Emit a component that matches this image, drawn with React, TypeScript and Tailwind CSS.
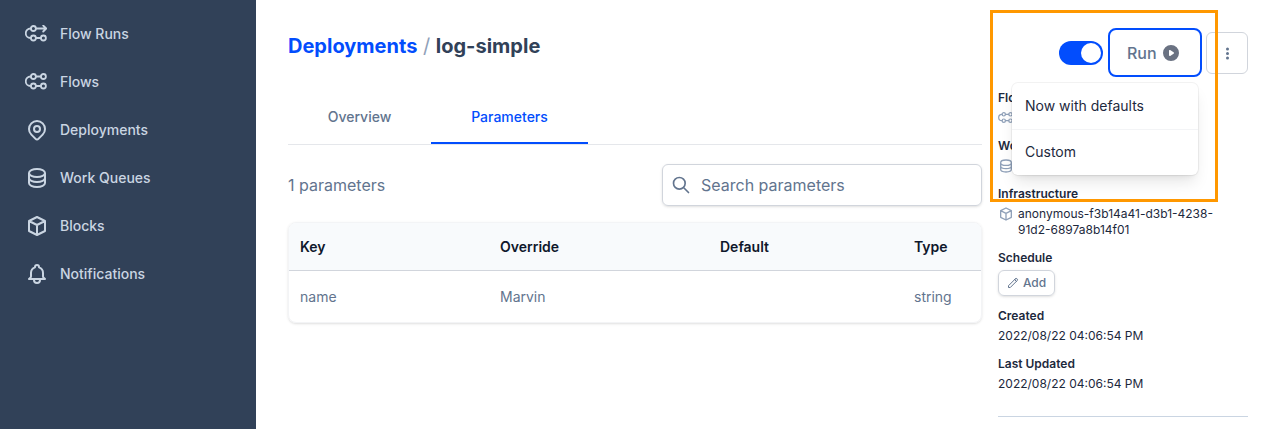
import { HiOutlineBell, HiOutlineCube, HiOutlineDatabase, HiOutlineLocationMarker, HiOutlinePencil, HiOutlineSearch, HiPlay, HiDotsVertical } from 'react-icons/hi';
import type { ReactNode } from 'react';

function FlowIcon({ run = false, className = '' }: { run?: boolean; className?: string }) {
  return (
    <svg viewBox="0 0 22 18" fill="none" stroke="currentColor" strokeWidth="1.8" strokeLinecap="round" strokeLinejoin="round" className={className}>
      <path d="M6 3.5H5.5a4.75 4.75 0 0 0 0 9.5H6" />
      <circle cx="8.4" cy="3.5" r="2.5" />
      <circle cx="8.4" cy="13" r="2.5" />
      <circle cx="18.4" cy="13" r="2.5" />
      <path d="M10.9 13H15.9" />
      {run ? (
        <path d="M10.9 3.5H21.2M18.2 .5 21.2 3.5l-3 3" />
      ) : (
        <>
          <circle cx="18.4" cy="3.5" r="2.5" />
          <path d="M10.9 3.5H15.9" />
        </>
      )}
    </svg>
  );
}

const NAV: { label: string; icon: ReactNode }[] = [
  { label: 'Flow Runs', icon: <FlowIcon run className="w-[22px] h-[18px]" /> },
  { label: 'Flows', icon: <FlowIcon className="w-[22px] h-[18px]" /> },
  { label: 'Deployments', icon: <HiOutlineLocationMarker className="w-6 h-6" /> },
  { label: 'Work Queues', icon: <HiOutlineDatabase className="w-6 h-6" /> },
  { label: 'Blocks', icon: <HiOutlineCube className="w-6 h-6" /> },
  { label: 'Notifications', icon: <HiOutlineBell className="w-6 h-6" /> },
];

function Detail({ label, children }: { label: string; children: ReactNode }) {
  return (
    <div className="mb-3">
      <div className="text-xs leading-4 font-semibold text-slate-800 mb-1">{label}</div>
      {children}
    </div>
  );
}

export default function App() {
  return (
    <div className="relative flex h-[429px] w-[1280px] overflow-hidden bg-white font-['Inter',sans-serif]">
      <nav className="w-64 shrink-0 bg-slate-700 pt-[10px]">
        {NAV.map((item) => (
          <div key={item.label} className="flex h-12 items-center pl-[25px] text-sm font-medium text-slate-300">
            <span className="flex w-[35px] justify-start">{item.icon}</span>
            {item.label}
          </div>
        ))}
      </nav>

      <main className="w-[694px] ml-8 shrink-0 pt-[33px]">
        <h1 className="text-xl leading-[26px] font-bold text-slate-700">
          <span className="text-[#024dfd]">Deployments</span>
          <span className="font-normal text-slate-400"> / </span>
          <span>log-simple</span>
        </h1>

        <div className="mt-[39px] flex h-[47px] border-b border-gray-200 text-sm font-medium">
          <div className="flex w-[143px] items-center justify-center pb-2 text-slate-500">Overview</div>
          <div className="flex w-[157px] h-[46px] items-center justify-center border-b-2 border-[#024dfd] pb-[6px] text-[#024dfd]">Parameters</div>
        </div>

        <div className="mt-[19px] flex h-[42px] items-center justify-between">
          <span className="text-base text-slate-500">1 parameters</span>
          <div className="flex h-[42px] w-80 items-center rounded-md border border-gray-300 pl-2 text-base text-slate-500 shadow-sm">
            <HiOutlineSearch className="mr-[10px] h-5 w-5" />
            Search parameters
          </div>
        </div>

        <div className="mt-4 overflow-hidden rounded-lg border border-gray-100 shadow text-sm">
          <div className="flex h-12 items-center border-b border-gray-300 bg-slate-50 pl-[11px] font-semibold text-slate-900">
            <span className="w-[200px]">Key</span>
            <span className="w-[220px]">Override</span>
            <span className="w-[194px]">Default</span>
            <span>Type</span>
          </div>
          <div className="flex h-[51px] items-center pl-[11px] text-slate-500">
            <span className="w-[200px]">name</span>
            <span className="w-[220px]">Marvin</span>
            <span className="w-[194px]" />
            <span>string</span>
          </div>
        </div>
      </main>

      <aside className="ml-4 w-[250px] shrink-0 pt-[28px]">
        <div className="flex h-[50px] items-center justify-end">
          <div className="flex h-6 w-11 items-center justify-end rounded-full bg-[#024dfd] pr-[2px]">
            <div className="h-5 w-5 rounded-full bg-white" />
          </div>
          <button className="ml-[5px] flex h-[49px] w-[94px] items-center gap-1 self-start rounded-lg border-2 border-[#024dfd] pl-[17px] text-base font-medium text-slate-500">
            Run
            <HiPlay className="h-5 w-5 text-gray-500" />
          </button>
          <button className="ml-[4px] flex h-[42px] w-[42px] items-center justify-center rounded-md border border-gray-300 text-slate-500">
            <HiDotsVertical className="h-[15px] w-[15px]" />
          </button>
        </div>

        <div className="mt-3 text-xs text-slate-800">
          <Detail label="Flow">
            <div className="flex h-4 items-center gap-[5px] text-slate-400">
              <FlowIcon className="h-3 w-[15px]" />
            </div>
          </Detail>
          <Detail label="Work Queue">
            <div className="flex h-4 items-center gap-[5px] text-slate-400">
              <HiOutlineDatabase className="h-4 w-4" />
            </div>
          </Detail>
          <Detail label="Infrastructure">
            <div className="flex gap-[4px] leading-4">
              <HiOutlineCube className="h-4 w-4 shrink-0 text-slate-400" />
              <span className="w-[210px]">anonymous-f3b14a41-d3b1-4238-91d2-6897a8b14f01</span>
            </div>
          </Detail>
          <Detail label="Schedule">
            <button className="flex h-[26px] w-[57px] items-center justify-center gap-1 rounded-md border border-gray-300 font-medium text-slate-500 shadow-sm">
              <HiOutlinePencil className="h-3 w-3" />
              Add
            </button>
          </Detail>
          <Detail label="Created">
            <div className="leading-4">2022/08/22 04:06:54 PM</div>
          </Detail>
          <Detail label="Last Updated">
            <div className="leading-4">2022/08/22 04:06:54 PM</div>
          </Detail>
          <div className="mt-6 border-t border-slate-300" />
        </div>
      </aside>

      {/* run menu, opens over the details column */}
      <div className="absolute left-[1012px] top-[83px] w-[186px] rounded-md bg-white text-sm text-slate-800 shadow-lg ring-1 ring-black/5">
        <div className="flex h-[47px] items-center border-b border-gray-100 pb-px pl-[13px]">Now with defaults</div>
        <div className="flex h-[45px] items-center pb-[2px] pl-[13px]">Custom</div>
      </div>

      {/* annotation frame from the screenshot */}
      <div className="absolute left-[990px] top-[10px] h-[192px] w-[228px] border-[3px] border-[#ff9800]" />
    </div>
  );
}
